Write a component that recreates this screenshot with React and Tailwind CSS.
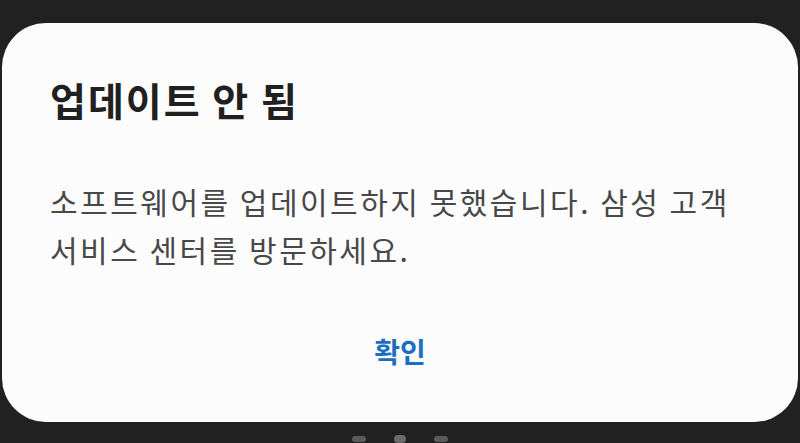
export default function App() {
  return (
    <div className="flex h-[443px] w-[800px] flex-col items-center overflow-hidden bg-[#212121] pt-[23px] font-['Noto_Sans_CJK_KR',sans-serif]">
      <div className="flex h-[403px] w-[796px] flex-col rounded-[44px] bg-[#fcfcfc] px-[48px] pt-[53px]">
        <h1 className="text-[39px] leading-[47px] font-bold tracking-[2px] text-[#202020]">
          업데이트 안 됨
        </h1>
        <p className="mt-[54px] text-[30px] leading-[48px] tracking-[2.5px] text-[#484848]">
          소프트웨어를 업데이트하지 못했습니다. 삼성 고객
          <br />
          서비스 센터를 방문하세요.
        </p>
        <div className="mt-[58px] flex justify-center">
          <button
            type="button"
            className="text-[28px] leading-[40px] font-bold text-[#1b6fc0]"
          >
            확인
          </button>
        </div>
      </div>
      <div className="mt-[13px] flex items-center gap-[28px]">
        <span className="h-[6px] w-[14px] rounded-full bg-[#5a5a5a]" />
        <span className="h-[8px] w-[12px] rounded-full bg-[#6a6a6a]" />
        <span className="h-[6px] w-[14px] rounded-full bg-[#5a5a5a]" />
      </div>
    </div>
  );
}
